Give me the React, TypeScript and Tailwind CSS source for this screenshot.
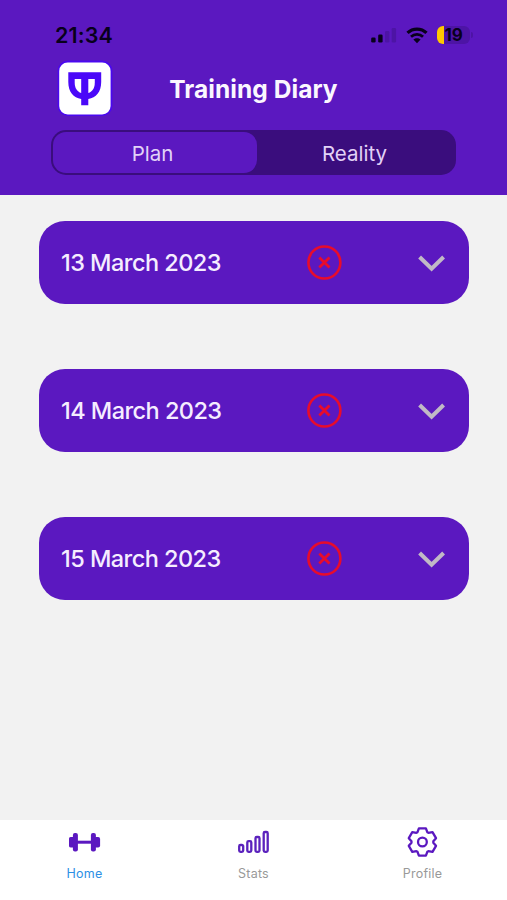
import React from "react";

const days = ["13 March 2023", "14 March 2023", "15 March 2023"];

function gearPoints() {
  const tooth = [
    [-4.9, -9.8],
    [-3.5, -13.7],
    [3.5, -13.7],
    [4.9, -9.8],
  ];
  const points: string[] = [];
  for (let i = 0; i < 6; i++) {
    const a = (i * Math.PI) / 3;
    for (const [x, y] of tooth) {
      points.push(
        `${(x * Math.cos(a) - y * Math.sin(a)).toFixed(2)},${(x * Math.sin(a) + y * Math.cos(a)).toFixed(2)}`
      );
    }
  }
  return points.join(" ");
}

function Logo() {
  return (
    <svg width="56" height="57" viewBox="0 0 56 57" className="block">
      <rect x="0.6" y="0.5" width="54.8" height="55.5" rx="10.5" fill="#4a08f0" />
      <rect x="2.2" y="2.5" width="51.4" height="52" rx="8.5" fill="#fff" />
      <path
        d="M11.3 12.2H44.2V22C44.2 32 39 37.7 31.3 39V45.2H24.2V39C16.5 37.7 11.3 32 11.3 22Z"
        fill="#4a08f8"
      />
      <path d="M17.7 19H24.2V33C20 31.7 17.7 28 17.7 22.5Z" fill="#fff" />
      <path d="M37.8 19H31.3V33C35.5 31.7 37.8 28 37.8 22.5Z" fill="#fff" />
    </svg>
  );
}

function StatusBar() {
  return (
    <div className="flex h-[26px] items-center justify-between pl-[55px] pr-[34px] text-[#08001b]">
      <span className="text-[21.5px] font-semibold leading-[26px] tracking-[0.1px]">21:34</span>
      <div className="flex items-center">
        <svg width="26" height="18" viewBox="0 0 26 18" className="block">
          <rect x="0.2" y="11.5" width="4.4" height="5" rx="1.3" fill="#08001b" />
          <rect x="7.2" y="8.5" width="4.4" height="8" rx="1.3" fill="#08001b" />
          <rect x="14" y="5" width="4.4" height="11.5" rx="1.3" fill="#4d14a5" />
          <rect x="20.7" y="2" width="4.4" height="14.5" rx="1.3" fill="#4d14a5" />
        </svg>
        <svg width="22" height="17" viewBox="0 0 22 17" className="ml-[9px] block">
          <path d="M1.5 5.9C6.8 .8 15.2 .8 20.5 5.9" fill="none" stroke="#08001b" strokeWidth="3.2" />
          <path d="M5 9.8C8.4 6.6 13.6 6.6 17 9.8" fill="none" stroke="#08001b" strokeWidth="2.8" />
          <path d="M7.4 12.6C9.5 10.7 12.5 10.7 14.6 12.6L11 16.3Z" fill="#08001b" />
        </svg>
        <div className="ml-[9px] flex items-center">
          <div className="flex h-[18px] w-[33px] items-center overflow-hidden rounded-[6px] bg-[#4d14a5]">
            <div className="h-[18px] w-[6.5px] shrink-0 bg-[#ffc800]" />
            <span className="pl-px text-[17px] font-bold leading-[18px] tracking-[-0.1px]">19</span>
          </div>
          <div className="ml-[1px] h-[6px] w-[2px] rounded-r-full bg-[#4d14a5]" />
        </div>
      </div>
    </div>
  );
}

function DayCard({ date }: { date: string }) {
  return (
    <div className="flex h-[83px] items-center rounded-[26px] bg-[#5b18c0] pl-[22px] pr-[23px]">
      <span className="w-[246px] whitespace-nowrap text-[23.5px] font-medium leading-[30px] tracking-[-0.55px] text-[#f5edff]">
        {date}
      </span>
      <svg width="36" height="36" viewBox="0 0 36 36" fill="none" stroke="#e80c2b" className="block">
        <circle cx="17.4" cy="17.5" r="16" strokeWidth="2.6" />
        <path d="M12.3 12.4L22.5 22.6M22.5 12.4L12.3 22.6" strokeWidth="2.8" />
      </svg>
      <svg width="28" height="18" viewBox="0 0 28 18" fill="none" className="ml-auto block">
        <path d="M1.6 3L13.6 14.8L25.6 3" stroke="#c1b9c6" strokeWidth="4" />
      </svg>
    </div>
  );
}

export default function App() {
  return (
    <div className="flex h-[900px] w-[507px] flex-col overflow-hidden bg-[#f2f2f2] font-['Inter','Liberation_Sans',sans-serif]">
      <header className="h-[195px] shrink-0 bg-[#5b18c0] pt-[22px]">
        <StatusBar />
        <div className="mt-[12px] grid h-[57px] grid-cols-[57px_393px_57px] items-center">
          <div className="pl-[57px]">
            <div className="w-14"><Logo /></div>
          </div>
          <h1 className="whitespace-nowrap text-center text-[24.5px] font-bold leading-[30px] tracking-[0.05px] text-[#fbf7ff]">
            Training Diary
          </h1>
        </div>
        <div className="ml-[51px] mt-[13px] flex h-[45px] w-[405px] rounded-[15px] bg-[#3a0d7d] p-[2px] text-[20.5px] leading-6 text-[#e2d2f7]">
          <div className="flex w-[204px] items-center justify-center rounded-[13px] bg-[#5b18c0] pr-[5px] pt-[2px]">Plan</div>
          <div className="flex flex-1 items-center justify-center pr-[2px] pt-[2px]">Reality</div>
        </div>
      </header>
      <main className="flex flex-1 flex-col gap-[65px] pl-[39px] pr-[38px] pt-[26px]">
        {days.map((d) => (
          <DayCard key={d} date={d} />
        ))}
      </main>
      <nav className="grid h-20 shrink-0 grid-cols-3 bg-white pt-[6px] text-[12.5px] leading-4 tracking-[0.2px] text-[#999]">
        <div className="flex flex-col items-center text-[#2d8fe5]">
          <svg width="32" height="32" viewBox="0.9 0 32 32" fill="#5b18c0" className="block">
            <rect x="0.8" y="11" width="6" height="10.4" rx="2" />
            <rect x="4.8" y="7" width="5" height="18.5" rx="2" />
            <rect x="9" y="14.7" width="14" height="3" />
            <rect x="22.8" y="7" width="5" height="18.5" rx="2" />
            <rect x="26" y="11" width="6" height="10.4" rx="2" />
          </svg>
          <span className="mt-2">Home</span>
        </div>
        <div className="flex flex-col items-center">
          <svg width="32" height="32" viewBox="0 0 32 32" fill="none" stroke="#5b22bd" strokeWidth="2.3" className="block">
            <rect x="1.2" y="19" width="4" height="6.8" rx="1.3" />
            <rect x="9.3" y="15.2" width="4" height="10.6" rx="1.3" />
            <rect x="17.5" y="11" width="4" height="14.8" rx="1.3" />
            <rect x="25.7" y="6" width="4" height="19.8" rx="1.3" />
          </svg>
          <span className="mt-2">Stats</span>
        </div>
        <div className="flex flex-col items-center">
          <svg width="32" height="32" viewBox="-15.4 -16 32 32" fill="none" stroke="#5b18c0" strokeWidth="2.3" strokeLinejoin="round" className="block">
            <polygon points={gearPoints()} />
            <circle r="4.4" />
          </svg>
          <span className="mt-2">Profile</span>
        </div>
      </nav>
    </div>
  );
}
